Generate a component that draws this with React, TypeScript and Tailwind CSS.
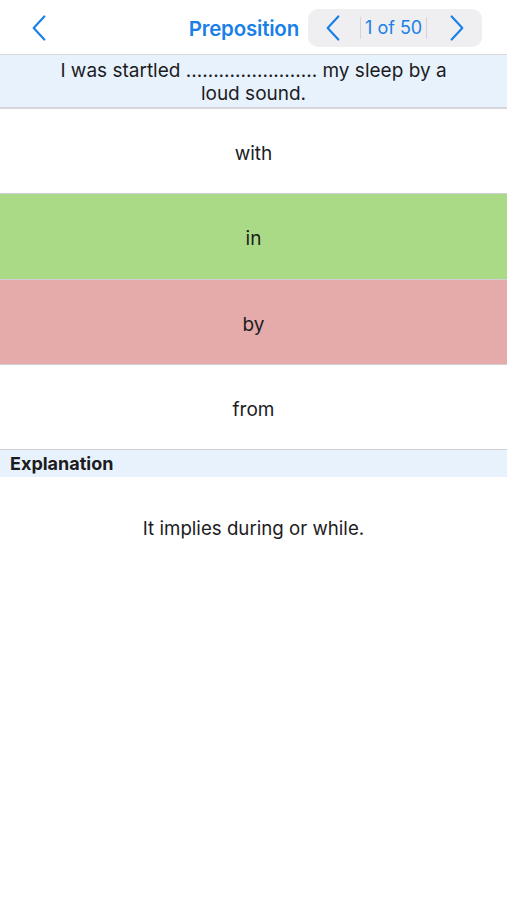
import React from "react";

function Chevron({ dir, className }: { dir: "left" | "right"; className?: string }) {
  return (
    <svg viewBox="0 0 18 30" className={className} fill="none" stroke="currentColor" strokeWidth="2.4" strokeLinecap="round" strokeLinejoin="round">
      {dir === "left" ? <path d="M15 2 L3 15 L15 28" /> : <path d="M3 2 L15 15 L3 28" />}
    </svg>
  );
}

const options = [
  { label: "with", bg: "bg-white", h: "h-[85px]" },
  { label: "in", bg: "bg-[#abda86]", h: "h-[86px]" },
  { label: "by", bg: "bg-[#e5abab]", h: "h-[85px]" },
  { label: "from", bg: "bg-white", h: "h-[85px]" },
];

export default function App() {
  return (
    <div className="min-h-[900px] w-[507px] bg-white font-['Inter',sans-serif] text-[#1c1c1e]">
      {/* ── Top bar ── */}
      <div className="flex h-[55px] items-center border-b border-[#d9d9de] pl-[31px] pr-[25px] pt-[1px]">
        <Chevron dir="left" className="h-[28px] w-[16px] text-[#1a7fe8]" />
        <div className="flex-1" />
        <span className="mr-[9px] pt-[4px] text-[20.5px] font-semibold tracking-[-0.2px] text-[#1a7fe8]">Preposition</span>
        <div className="flex h-[38px] w-[174px] items-center rounded-[10px] bg-[#efeff1] pl-[17px] pr-[17px]">
          <Chevron dir="left" className="h-[28px] w-[16px] text-[#1a7fe8]" />
          <div className="ml-[19px] flex h-[22px] items-center border-x border-[#d4d4d8] px-[4px]">
            <span className="text-[18px] text-[#1a7fe8]">1 of 50</span>
          </div>
          <div className="flex-1" />
          <Chevron dir="right" className="h-[28px] w-[16px] text-[#1a7fe8]" />
        </div>
      </div>

      {/* ── Question ── */}
      <div className="flex h-[54px] items-center justify-center border-b-2 border-[#d6d6db] bg-[#e8f2fd] px-6 pt-[2px] text-center text-[19px] leading-[23px]">
        I was startled ........................ my sleep by a
        <br />
        loud sound.
      </div>

      {/* ── Options ── */}
      {options.map((o) => (
        <div
          key={o.label}
          className={`flex items-center justify-center border-b border-[#d0d0d4] pt-[6px] text-[19px] ${o.h} ${o.bg}`}
        >
          {o.label}
        </div>
      ))}

      {/* ── Explanation ── */}
      <div className="flex h-[27px] items-center bg-[#e8f2fd] px-[10px] text-[18px] font-bold">
        Explanation
      </div>
      <div className="pt-[38px] text-center text-[18.7px]">It implies during or while.</div>
    </div>
  );
}
